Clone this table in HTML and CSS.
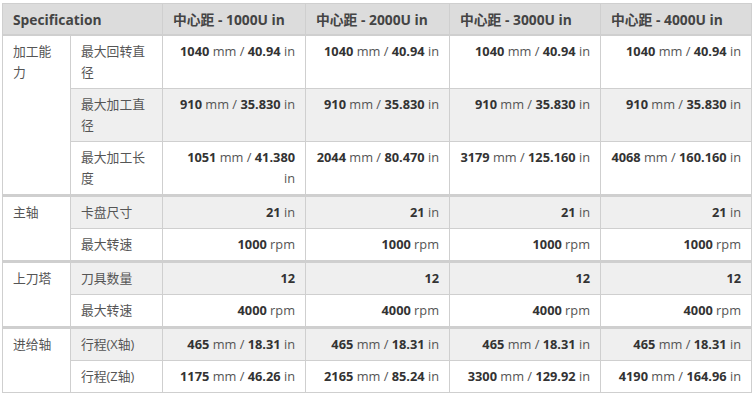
FILE: index.html
```html
<!DOCTYPE html>
<html>
<head>
<meta charset="utf-8">
<link rel="stylesheet" href="styles.css">
</head>
<body>
<table class="spec">
  <colgroup>
    <col class="c1"><col class="c2"><col class="c3"><col class="c4"><col class="c5"><col class="c6">
  </colgroup>
  <thead>
    <tr>
      <th colspan="2">Specification</th>
      <th>中心距 - 1000U in</th>
      <th>中心距 - 2000U in</th>
      <th>中心距 - 3000U in</th>
      <th>中心距 - 4000U in</th>
    </tr>
  </thead>
  <tbody>
    <tr>
      <td class="grp" rowspan="3">加工能力</td>
      <td class="name">最大回转直径</td>
      <td class="val"><b>1040</b> mm / <b>40.94</b> in</td>
      <td class="val"><b>1040</b> mm / <b>40.94</b> in</td>
      <td class="val"><b>1040</b> mm / <b>40.94</b> in</td>
      <td class="val"><b>1040</b> mm / <b>40.94</b> in</td>
    </tr>
    <tr class="alt">
      <td class="name">最大加工直径</td>
      <td class="val"><b>910</b> mm / <b>35.830</b> in</td>
      <td class="val"><b>910</b> mm / <b>35.830</b> in</td>
      <td class="val"><b>910</b> mm / <b>35.830</b> in</td>
      <td class="val"><b>910</b> mm / <b>35.830</b> in</td>
    </tr>
    <tr>
      <td class="name">最大加工长度</td>
      <td class="val"><b>1051</b> mm / <b>41.380</b> in</td>
      <td class="val"><b>2044</b> mm / <b>80.470</b> in</td>
      <td class="val"><b>3179</b> mm / <b>125.160</b> in</td>
      <td class="val"><b>4068</b> mm / <b>160.160</b> in</td>
    </tr>
  </tbody>
  <tbody class="sep">
    <tr class="alt">
      <td class="grp" rowspan="2">主轴</td>
      <td class="name">卡盘尺寸</td>
      <td class="val"><b>21</b> in</td>
      <td class="val"><b>21</b> in</td>
      <td class="val"><b>21</b> in</td>
      <td class="val"><b>21</b> in</td>
    </tr>
    <tr>
      <td class="name">最大转速</td>
      <td class="val"><b>1000</b> rpm</td>
      <td class="val"><b>1000</b> rpm</td>
      <td class="val"><b>1000</b> rpm</td>
      <td class="val"><b>1000</b> rpm</td>
    </tr>
  </tbody>
  <tbody class="sep">
    <tr class="alt">
      <td class="grp" rowspan="2">上刀塔</td>
      <td class="name">刀具数量</td>
      <td class="val"><b>12</b></td>
      <td class="val"><b>12</b></td>
      <td class="val"><b>12</b></td>
      <td class="val"><b>12</b></td>
    </tr>
    <tr>
      <td class="name">最大转速</td>
      <td class="val"><b>4000</b> rpm</td>
      <td class="val"><b>4000</b> rpm</td>
      <td class="val"><b>4000</b> rpm</td>
      <td class="val"><b>4000</b> rpm</td>
    </tr>
  </tbody>
  <tbody class="sep">
    <tr class="alt">
      <td class="grp" rowspan="2">进给轴</td>
      <td class="name">行程(X轴)</td>
      <td class="val"><b>465</b> mm / <b>18.31</b> in</td>
      <td class="val"><b>465</b> mm / <b>18.31</b> in</td>
      <td class="val"><b>465</b> mm / <b>18.31</b> in</td>
      <td class="val"><b>465</b> mm / <b>18.31</b> in</td>
    </tr>
    <tr>
      <td class="name">行程(Z轴)</td>
      <td class="val"><b>1175</b> mm / <b>46.26</b> in</td>
      <td class="val"><b>2165</b> mm / <b>85.24</b> in</td>
      <td class="val"><b>3300</b> mm / <b>129.92</b> in</td>
      <td class="val"><b>4190</b> mm / <b>164.96</b> in</td>
    </tr>
  </tbody>
</table>
</body>
</html>
```
FILE: styles.css
```css
html, body {
  margin: 0;
  padding: 0;
  background: #fff;
}
body {
  padding: 3px 0 0 2px;
  font-family: "Open Sans", "Noto Sans CJK SC", sans-serif;
  font-size: 12.8px;
  color: #555;
}
.spec {
  border-collapse: collapse;
  table-layout: fixed;
  width: 750px;
}
.c1 { width: 68px; }
.c2 { width: 92px; }
.c3 { width: 143px; }
.c4 { width: 144px; }
.c5 { width: 151px; }
.c6 { width: 151px; }
.spec th, .spec td {
  border: 1px solid #cfcfcf;
  padding: 5px 10px 5px;
  line-height: 21px;
  vertical-align: top;
}
.spec th {
  background: #dcdcdc;
  color: #444;
  font-weight: bold;
  font-size: 13.8px;
  text-align: left;
  padding: 5px 10px 4px;
  border-bottom: 2px solid #cfcfcf;
}
.spec td.val {
  text-align: right;
  color: #555;
}
.spec td b {
  color: #333;
  font-weight: bold;
}
.spec tr.alt td {
  background: #efefef;
}
.spec tr.alt td.grp,
.spec td.grp {
  background: #fff;
}
.spec tbody.sep tr:first-child td {
  border-top: 3px solid #cfcfcf;
}
```
